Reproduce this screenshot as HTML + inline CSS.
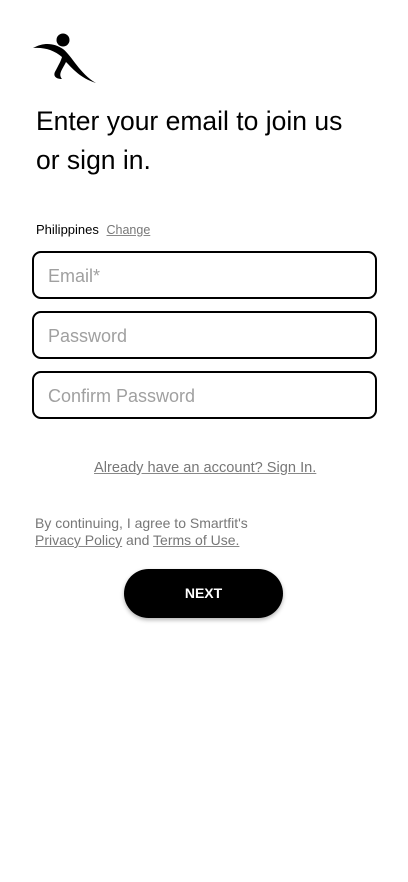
<!DOCTYPE html>
<html><head><meta charset="utf-8"><style>
*{margin:0;padding:0;box-sizing:border-box}
body{width:408px;height:882px;background:#fff;font-family:"Liberation Sans",sans-serif;position:relative;overflow:hidden}
.abs{position:absolute}
h1{position:absolute;left:36px;top:102px;font-size:26.5px;font-weight:normal;line-height:39px;color:#000;letter-spacing:0}
.inp{position:absolute;left:32px;width:345px;height:48px;border:2px solid #000;border-radius:9px;font-size:18px;color:#a0a0a0;padding:13px 0 0 14px}
.u{text-decoration:underline;text-decoration-color:#888}
</style></head><body>
<svg class="abs" style="left:30px;top:30px" width="70" height="56" viewBox="0 0 70 56">
<circle cx="33" cy="10" r="6.5" fill="#000"/>
<path d="M3 18 C14 12 24 13 33 19 C42 26 50 44 66 53 C50 48 42 38 36 32 C32 40 28 44 32 49 C26 49 22 46 26 40 C28 36 31 31 32 27 C24 20 14 17 3 18 Z" fill="#000"/>
</svg>
<h1>Enter your email to join us<br>or sign in.</h1>
<div class="abs" style="left:36px;top:222px;font-size:13px;color:#000">Philippines <span class="u" style="color:#777;margin-left:4px;font-size:12.5px">Change</span></div>
<div class="inp" style="top:251px">Email*</div>
<div class="inp" style="top:311px">Password</div>
<div class="inp" style="top:371px">Confirm Password</div>
<div class="abs u" style="left:94px;top:460px;font-size:14.6px;color:#777">Already have an account? Sign In.</div>
<div class="abs" style="left:35px;top:515px;font-size:14px;color:#777;line-height:17px">By continuing, I agree to Smartfit's<br><span class="u">Privacy Policy</span> and <span class="u">Terms of Use.</span></div>
<div class="abs" style="left:124px;top:569px;width:159px;height:49px;background:#000;border-radius:25px;color:#fff;font-weight:bold;font-size:14px;text-align:center;line-height:49px;box-shadow:0 2px 4px rgba(0,0,0,.3)">NEXT</div>
</body></html>
